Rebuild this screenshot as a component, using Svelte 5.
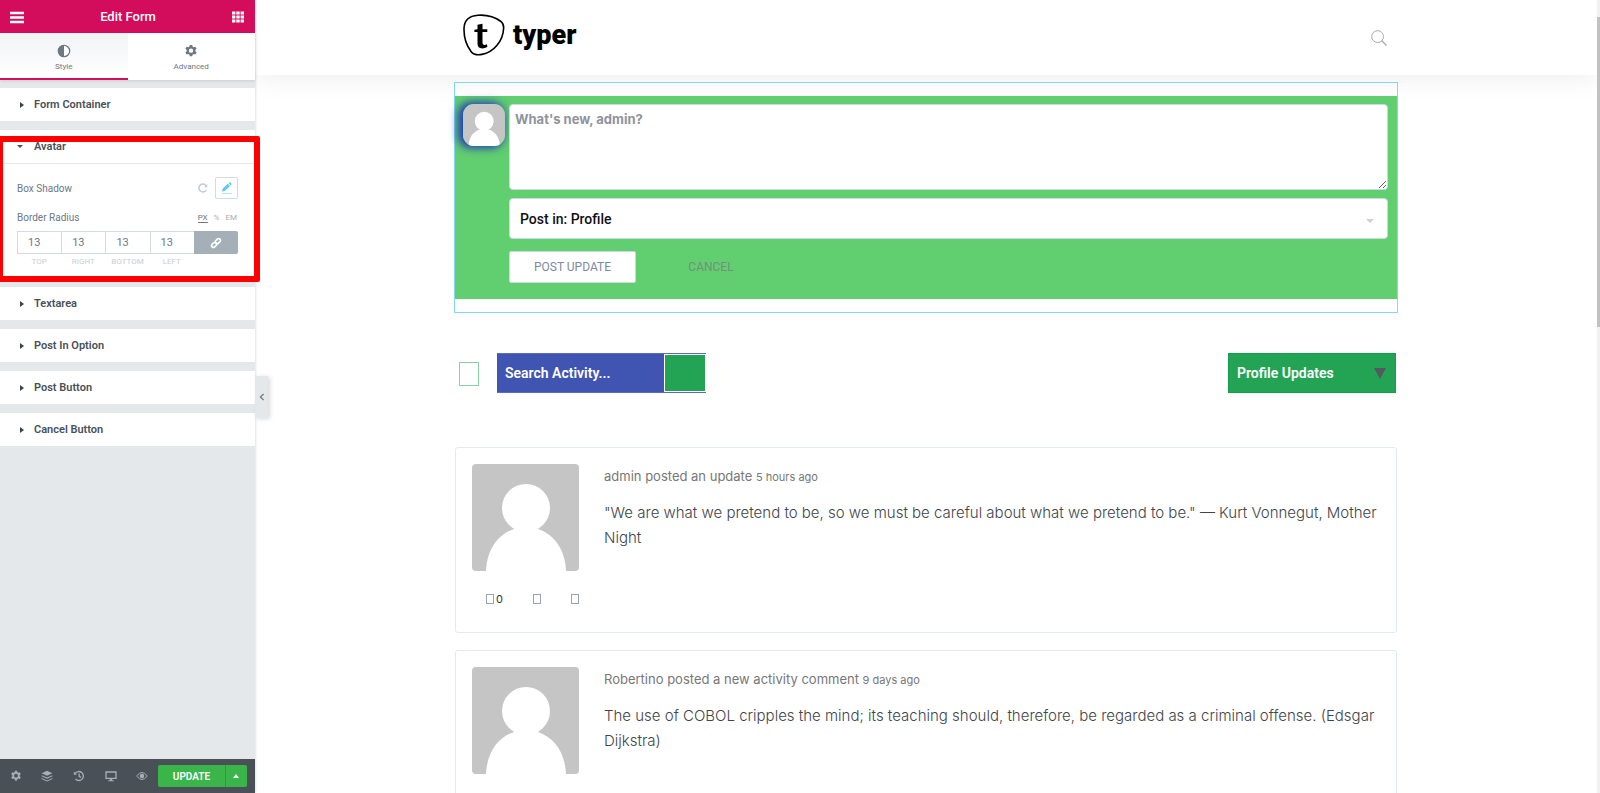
<script lang="ts">
  const before = ['Form Container'];
  const after = ['Textarea', 'Post In Option', 'Post Button', 'Cancel Button'];
  const sides = ['Top', 'Right', 'Bottom', 'Left'];
  const activities = [
    {
      action: 'admin posted an update',
      when: '5 hours ago',
      text: '"We are what we pretend to be, so we must be careful about what we pretend to be." — Kurt Vonnegut, Mother Night'
    },
    {
      action: 'Robertino posted a new activity comment',
      when: '9 days ago',
      text: 'The use of COBOL cripples the mind; its teaching should, therefore, be regarded as a criminal offense. (Edsgar Dijkstra)'
    }
  ];
  const gear =
    'M6.6 1h2.8l.4 1.9 1.3.8 1.9-.7 1.4 2.5-1.5 1.3v1.5l1.5 1.3-1.4 2.5-1.9-.7-1.3.8-.4 1.8H6.6l-.4-1.8-1.3-.8-1.9.7-1.4-2.5 1.5-1.3V6.8L1.6 5.5 3 3l1.9.7 1.3-.8zM8 5.1a2.5 2.5 0 1 0 0 5 2.5 2.5 0 0 0 0-5z';
</script>

{#snippet face()}
  <svg viewBox="0 0 107 107" aria-hidden="true">
    <rect width="107" height="107" fill="#c5c5c5" />
    <circle cx="54" cy="44" r="24" fill="#fff" />
    <path d="M14 107C15 84 27 70 42 65h24c15 5 27 19 28 42z" fill="#fff" />
  </svg>
{/snippet}

{#snippet section(name: string)}
  <section><button class="heading"><i class="right"></i>{name}</button></section>
{/snippet}

<div class="editor">
  <aside>
    <header class="top">
      <button aria-label="Menu">
        <svg width="16" height="16" viewBox="0 0 16 16"><path d="M1 4h14M1 8.500h14M1 13h14" stroke="#fff" stroke-width="2.400" /></svg>
      </button>
      <h1>Edit Form</h1>
      <button aria-label="Widgets">
        <svg width="14" height="14" viewBox="0 0 14 14"><path d="M1 3h12M1 7h12M1 11h12" stroke="#fff" stroke-width="3" stroke-dasharray="3.4 .9" /></svg>
      </button>
    </header>
    <nav>
      <button class="active">
        <svg width="14" height="14" viewBox="0 0 14 14"><circle cx="7" cy="7" r="5.7" fill="#fff" stroke="#6d7882" stroke-width="1.3" /><path d="M7 1a6 6 0 0 0 0 12z" fill="#6d7882" /></svg>
        Style
      </button>
      <button>
        <svg width="14" height="14" viewBox="0 0 16 16"><path d={gear} fill="#6d7882" fill-rule="evenodd" /></svg>
        Advanced
      </button>
    </nav>
    <div class="sections">
      {#each before as name}{@render section(name)}{/each}
      <section>
        <button class="heading open"><i class="down"></i>Avatar</button>
        <div class="controls">
          <div class="control">
            <span>Box Shadow</span>
            <button class="reset" aria-label="Reset">
              <svg width="10" height="10" viewBox="0 0 10 10"><path d="M8.2 7.3A4 4 0 1 1 8 2.4" fill="none" stroke="#c2cbd2" stroke-width="1.5" /><path d="M9.3.9v3.300H6z" fill="#c2cbd2" /></svg>
            </button>
            <button class="edit" aria-label="Edit box shadow">
              <svg width="12" height="12" viewBox="0 0 12 12"><path d="M1 9.5l.6-2.7L6.8 1.8 9 4 3.7 9z M7.5 1.1 8.3.4q.5-.3 1 0l1.2 1.2q.3.5 0 1l-.8.8z" fill="#5bcbf5" /><path d="M1 11.5h10" stroke="#b5e7fa" /></svg>
            </button>
          </div>
          <div class="control units">
            <span>Border Radius</span>
            <button class="on">PX</button><button>%</button><button>EM</button>
          </div>
          <div class="dimensions">
            {#each sides as side}
              <label><input value="13" />{side}</label>
            {/each}
            <button class="link" aria-label="Link values together">
              <svg width="12" height="12" viewBox="0 0 12 12" fill="none" stroke="#fff" stroke-width="1.6"><rect x="-2.8" y="-1.8" width="5.6" height="3.6" rx="1.8" transform="translate(4.1 7.9) rotate(-45)" /><rect x="-2.8" y="-1.8" width="5.6" height="3.6" rx="1.8" transform="translate(7.9 4.1) rotate(-45)" /></svg>
            </button>
          </div>
        </div>
      </section>
      {#each after as name}{@render section(name)}{/each}
    </div>
    <footer>
      <button aria-label="Settings"><svg width="12" height="12" viewBox="0 0 16 16"><path d={gear} fill="#a4afb7" fill-rule="evenodd" /></svg></button>
      <button aria-label="Navigator"><svg width="12" height="12" viewBox="0 0 12 12" fill="#a4afb7"><path d="M6 .8 11.4 3.3 6 5.8.6 3.3z" /><path d="M.6 5.2 6 7.6l5.4-2.4v1L6 8.7.6 6.2z" /><path d="M.6 8 6 10.4 11.4 8v1L6 11.5.6 9z" /></svg></button>
      <button aria-label="History"><svg width="12" height="12" viewBox="0 0 12 12" fill="none" stroke="#a4afb7" stroke-width="1.3"><path d="M2.2 3.4a4.5 4.5 0 1 1 .3 5.6M6.2 3.4v3l1.8 1" /><path d="M.8 1.6v3.1h3.1z" fill="#a4afb7" stroke="none" /></svg></button>
      <button aria-label="Responsive mode"><svg width="12" height="12" viewBox="0 0 12 12"><path d="M1 2h10v6.4H1z" fill="none" stroke="#a4afb7" stroke-width="1.3" /><path d="M5 8.6h2l.5 1.8H9v.9H3v-.9h1.5z" fill="#a4afb7" /></svg></button>
      <button aria-label="Preview"><svg width="12" height="12" viewBox="0 0 12 12"><path d="M.7 6q5.3-7 10.6 0-5.3 7-10.6 0z" fill="none" stroke="#a4afb7" /><circle cx="6" cy="6" r="2.3" fill="#a4afb7" /></svg></button>
      <button class="update">UPDATE</button>
      <button class="more" aria-label="Save options"><i class="up"></i></button>
    </footer>
    <button class="collapse" aria-label="Collapse panel">
      <svg width="6" height="8" viewBox="0 0 6 8"><path d="M4.6 1 1.4 4l3.2 3" fill="none" stroke="#6d7882" stroke-width="1.2" /></svg>
    </button>
    <div class="highlight"></div>
  </aside>

  <main>
    <header class="site">
      <div class="wrap bar">
        <a class="logo" href="#home">
          <svg width="42" height="42" viewBox="0 0 42 42"><path d="M15 1.2C23 .6 32 3 38 7.500q3 2.500 2.600 7C40 27 31 38 19 40.400c-5 .9-8.500.3-10.800-2.700C3 31 .8 23 1 14.500 1.200 6 6 1.800 15 1.200z" fill="none" stroke="#000" stroke-width="1.600" /><path d="M14.500 10.800l5-1v5.400h4.800v2.900h-4.800v10.200c0 2 .8 2.600 2 2.600.9 0 1.700-.3 2.400-.6l.5 2.500c-1.600 1.100-3.400 1.600-5.200 1.600-3.200 0-4.700-1.700-4.700-4.900V18.100h-3.100v-2.400l3.100-.5z" fill="#000" /></svg>
          typer
        </a>
        <button aria-label="Search"><svg width="16" height="16" viewBox="0 0 16 16" fill="none" stroke="#a9a9a9"><circle cx="6.600" cy="6.600" r="5.900" /><path d="M10.800 10.800l4.700 4.700" stroke-width="1.300" /></svg></button>
      </div>
    </header>

    <div class="wrap">
      <div class="widget">
        <form onsubmit={(e) => e.preventDefault()}>
          <div class="me">{@render face()}</div>
          <div class="fields">
            <textarea aria-label="What's new" placeholder="What's new, admin?"></textarea>
            <div class="select postin">
              <select aria-label="Post in"><option>Post in: Profile</option></select>
              <i class="down"></i>
            </div>
            <div class="actions">
              <button class="post">POST UPDATE</button>
              <button class="cancel" type="reset">CANCEL</button>
            </div>
          </div>
        </form>
      </div>

      <div class="tools">
        <a class="rss" href="#rss" aria-label="RSS"></a>
        <div class="search">
          <input aria-label="Search Activity" placeholder="Search Activity..." />
          <button aria-label="Submit search"></button>
        </div>
        <div class="select filter">
          <select aria-label="Show"><option>Profile Updates</option></select>
          <i class="down"></i>
        </div>
      </div>

      {#each activities as item}
        <article>
          <div class="side">
            <div class="avatar">{@render face()}</div>
            <div class="meta">
              <button aria-label="Comments"><b></b>0</button>
              <button aria-label="Favourite"><b></b></button>
              <button aria-label="Delete"><b></b></button>
            </div>
          </div>
          <div class="body">
            <p class="action">{item.action} <small>{item.when}</small></p>
            <p class="text">{item.text}</p>
          </div>
        </article>
      {/each}
    </div>
  </main>
  <div class="scroll"><div></div></div>
</div>

<style>
  :global(body) { margin: 0; background: #fff; }
  .editor, .editor * { box-sizing: border-box; }
  .editor {
    display: flex;
    height: 100vh;
    overflow: hidden;
    font-family: Roboto, sans-serif;
  }
  button, input, select, textarea { font: inherit; color: inherit; margin: 0; border-radius: 0; }
  button { border: 0; background: none; padding: 0; }
  svg { display: block; }
  h1, p { margin: 0; }

  i { display: block; flex: none; border: 4px solid transparent; }
  i.right { border-width: 3px 0 3px 4px; border-left-color: #3a444c; margin: 0 3px 0 0; }
  i.down { border-width: 4px 4px 0; border-top-color: currentColor; }
  .heading i.down { border-width: 3px 3px 0; }
  i.up { border-width: 0 3px 4px; border-bottom-color: #fff; }

  aside {
    position: relative;
    z-index: 2;
    flex: none;
    display: flex;
    flex-direction: column;
    width: 255px;
    background: #e5e8eb;
    box-shadow: 0 0 3px rgba(0, 0, 0, .2);
  }
  .top {
    display: flex;
    align-items: center;
    justify-content: space-between;
    height: 33px;
    padding: 0 10px 0 9px;
    background: #d30c5c;
    color: #fff;
  }
  h1 { font-size: 13px; font-weight: 500; }
  nav { display: flex; height: 47px; background: #fff; box-shadow: 0 1px 3px rgba(0, 0, 0, .12); }
  nav button {
    flex: 1;
    display: flex;
    flex-direction: column;
    align-items: center;
    gap: 3px;
    padding-top: 11px;
    font-size: 8px;
    line-height: 12px;
    color: #6d7882;
  }
  nav .active { background: linear-gradient(#f1f3f5, #fff); border-bottom: 2px solid #d30c5c; }
  .sections { flex: 1; display: flex; flex-direction: column; gap: 9px; padding-top: 8px; }
  section { background: #fff; }
  .heading {
    display: flex;
    align-items: center;
    gap: 7px;
    width: 100%;
    height: 33px;
    padding-left: 20px;
    font-size: 11px;
    font-weight: 600;
    color: #495157;
  }
  .heading.open { height: 34px; gap: 11px; padding-left: 17px; border-bottom: 1px solid #e6e9ec; }
  .controls { padding: 13px 17px 8px; font-size: 10px; color: #6d7882; }
  .control { display: flex; align-items: center; height: 22px; }
  .control span { flex: 1; }
  .edit {
    display: flex;
    align-items: center;
    justify-content: center;
    width: 23px;
    height: 22px;
    margin-left: 7px;
    border: 1px solid #d5dadf;
    border-radius: 2px;
  }
  .units { margin: 8px 0 3px; gap: 6px; height: 21px; }
  .units button { font-size: 8px; line-height: 9px; color: #a4afb7; }
  .units button.on { color: #6d7882; border-bottom: 1px solid #6d7882; }
  .units button:last-child { padding-right: 1px; }
  .dimensions { display: grid; grid-template-columns: repeat(5, 1fr); }
  label { font-size: 8px; line-height: 16px; text-align: center; text-transform: uppercase; color: #c8ced4; }
  label input {
    display: block;
    width: 100%;
    height: 23px;
    padding: 0 0 0 10px;
    border: 1px solid #d5dadf;
    border-right: 0;
    font-size: 11px;
    color: #6d7882;
    background: #fff;
  }
  .link { display: flex; align-items: center; justify-content: center; height: 23px; background: #a4afb7; border-radius: 0 2px 2px 0; }
  footer { display: flex; align-items: center; height: 34px; padding: 0 8px 0 0; background: #495157; }
  footer button { flex: 1; display: flex; align-items: center; justify-content: center; height: 22px; }
  footer .update {
    flex: 0 0 67px;
    background: #39b54a;
    color: #fff;
    font-size: 10px;
    font-weight: 600;
    border-radius: 2px 0 0 2px;
  }
  footer .more { flex: 0 0 22px; background: #39b54a; border-left: 1px solid #2f9a3d; border-radius: 0 2px 2px 0; }
  .collapse {
    position: absolute;
    left: 100%;
    top: 376px;
    display: flex;
    align-items: center;
    justify-content: center;
    width: 13px;
    height: 42px;
    background: #e5e8eb;
    box-shadow: 2px 1px 4px rgba(0, 0, 0, .15);
  }
  .highlight {
    position: absolute;
    top: 136px;
    left: -3px;
    right: -5px;
    height: 146px;
    border: 6px solid #f00;
    border-radius: 2px;
    pointer-events: none;
  }

  main { flex: 1; min-width: 0; overflow: hidden; background: #fff; font-family: Inter, sans-serif; }
  .wrap { max-width: 944px; margin: 0 auto; }
  .site { position: relative; height: 75px; background: #fff; box-shadow: 0 6px 24px rgba(0, 0, 0, .06); }
  .bar { display: flex; justify-content: space-between; align-items: center; height: 75px; padding: 0 11px 0 9px; }
  .logo {
    display: flex;
    align-items: center;
    gap: 8px;
    padding-bottom: 6px;
    font: 900 27px/42px Roboto, sans-serif;
    color: #000;
    text-decoration: none;
  }
  .widget { position: relative; margin-top: 7px; padding: 13px 0; border: 1px solid #7fd8f5; }
  form { display: flex; gap: 4px; padding: 8px 9px 16px 8px; background: #61ce70; }
  .me {
    flex: none;
    width: 42px;
    height: 42px;
    border-radius: 11px;
    box-shadow: -3px 0 9px 2px #2338b8;
  }
  .me svg { border-radius: 11px; }
  .fields { flex: 1; min-width: 0; }
  textarea {
    display: block;
    width: 100%;
    height: 86px;
    padding: 5px;
    border: 1px solid #cbd9e6;
    border-radius: 4px;
    background: #fff;
    font-size: 13px;
    line-height: 18px;
    outline: 0;
    resize: vertical;
  }
  textarea::placeholder { color: #8f939c; font-weight: 700; opacity: 1; }
  .select { display: grid; align-items: center; }
  .select > * { grid-area: 1 / 1; }
  .select i { justify-self: end; pointer-events: none; }
  select { appearance: none; width: 100%; outline: 0; font-family: Roboto, sans-serif; }
  .postin { margin: 8px 0 12px; }
  .postin select {
    height: 41px;
    padding: 0 10px;
    border: 1px solid #cbd9e6;
    border-radius: 4px;
    background: #fff;
    font-size: 14px;
    font-weight: 500;
    color: #111;
  }
  .postin i { margin: 4px 14px 0 0; color: #c8d2de; }
  .actions { display: flex; height: 32px; font: 12px Roboto, sans-serif; }
  .post { width: 127px; background: #fff; border: 1px solid #cbd9e6; border-radius: 2px; color: #7c8aa5; }
  .cancel { width: 150px; color: #75907c; }

  .tools { display: flex; align-items: center; height: 40px; margin: 40px 2px 54px 5px; }
  .rss { width: 20px; height: 24px; margin: 2px 18px 0 0; border: 1px solid #8ccfa5; }
  .search { display: flex; align-items: center; height: 40px; border: solid #5b6cba; border-width: 1px 0; }
  .search input {
    width: 167px;
    height: 38px;
    padding: 0 8px;
    border: 0;
    background: #4054b2;
    color: #fff;
    font: 600 14px Roboto, sans-serif;
    outline: 0;
  }
  .search input::placeholder { color: #fff; opacity: 1; }
  .search button { width: 40px; height: 36px; margin: 0 1px; background: #23a455; }
  .filter { width: 168px; margin-left: auto; }
  .filter select {
    height: 40px;
    padding: 0 8px;
    border: 1px solid #12a04a;
    background: #23a455;
    color: #fff;
    font-size: 14px;
    font-weight: 600;
  }
  .filter i.down { border-width: 11px 6px 0; margin-right: 10px; color: #54595f; }

  article {
    display: flex;
    gap: 25px;
    margin: 0 1px 17px;
    padding: 16px;
    border: 1px solid #e2e9f4;
    border-radius: 3px;
    min-height: 186px;
  }
  .side { flex: none; width: 107px; }
  .avatar svg { border-radius: 4px; }
  .meta { display: flex; justify-content: space-between; margin-top: 20px; padding-left: 14px; font-size: 11px; line-height: 16px; color: #333; }
  .meta button { display: flex; align-items: center; gap: 2px; }
  .meta b { width: 8px; height: 10px; border: 1px solid #98a1b8; }
  .action { margin-top: 2px; font-size: 13px; line-height: 20px; color: #777; }
  small { font-size: 11px; font-weight: 400; color: #777; }
  .text { margin-top: 13px; font-size: 15px; font-weight: 300; line-height: 25px; color: #40454b; }

  .scroll { flex: none; width: 3px; padding-top: 17px; background: #f1f1f1; }
  .scroll div { height: 40%; background: #c1c1c1; }
</style>
